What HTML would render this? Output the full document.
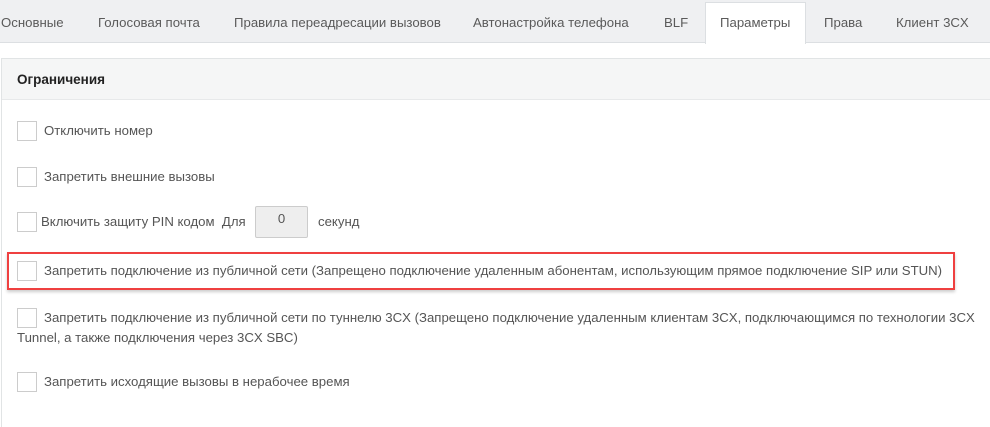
<!DOCTYPE html>
<html><head><meta charset="utf-8"><style>
html,body{margin:0;width:990px;height:427px;overflow:hidden;}
body{position:relative;background:#fff;font-family:"Liberation Sans",sans-serif;font-size:13.2px;color:#555;}
.tabs{position:absolute;left:0;top:0;width:990px;height:42px;background:#eff0f2;border-bottom:1px solid #dcdfe2;}
.tab{position:absolute;top:15px;white-space:nowrap;color:#5a5a5a;}
.active{position:absolute;left:705px;top:2px;width:99px;height:41px;background:#fff;border:1px solid #dcdfe2;border-bottom:none;}
.panel{position:absolute;left:1px;top:58px;width:988px;height:369px;border:1px solid #e1e4e5;border-right:none;border-bottom:none;}
.ph{height:40px;background:#f5f6f6;border-bottom:1px solid #e7e9ea;}
.cb{position:absolute;left:17px;width:18px;height:18px;border:1px solid #ccc;background:#fff;}
.t{position:absolute;left:44px;white-space:nowrap;color:#555;}
.inp{position:absolute;left:255px;top:206px;width:53px;height:32px;background:#eee;border:1px solid #ccc;border-radius:2px;box-sizing:border-box;text-align:center;line-height:24px;}
.red{position:absolute;left:7px;top:252px;width:944px;height:34px;border:2px solid #ef4040;box-shadow:0 2px 3px rgba(0,0,0,.2);}
</style></head><body>
<div class="tabs"></div>
<div class="active"></div>
<span class="tab" style="left:1px">Основные</span>
<span class="tab" style="left:98px">Голосовая почта</span>
<span class="tab" style="left:234px">Правила переадресации вызовов</span>
<span class="tab" style="left:473px">Автонастройка телефона</span>
<span class="tab" style="left:664px">BLF</span>
<span class="tab" style="left:720px">Параметры</span>
<span class="tab" style="left:824px">Права</span>
<span class="tab" style="left:896px">Клиент 3CX</span>
<div class="panel"><div class="ph"></div><b style="position:absolute;left:15px;top:13px;color:#222;font-size:13.5px;">Ограничения</b></div>
<div class="cb" style="top:121px"></div><span class="t" style="top:123px">Отключить номер</span>
<div class="cb" style="top:167px"></div><span class="t" style="top:169px">Запретить внешние вызовы</span>
<div class="cb" style="top:212px"></div><span class="t" style="left:41px;top:214px">Включить защиту PIN кодом&nbsp; Для</span>
<div class="inp">0</div><span class="t" style="left:318px;top:214px">секунд</span>
<div class="red"></div>
<div class="cb" style="top:261px"></div><span class="t" style="top:263px">Запретить подключение из публичной сети (Запрещено подключение удаленным абонентам, использующим прямое подключение SIP или STUN)</span>
<div class="cb" style="top:308px"></div><span class="t" style="top:310px">Запретить подключение из публичной сети по туннелю 3CX (Запрещено подключение удаленным клиентам 3CX, подключающимся по технологии 3CX</span>
<span class="t" style="left:17px;top:330px">Tunnel, а также подключения через 3CX SBC)</span>
<div class="cb" style="top:372px"></div><span class="t" style="top:374px">Запретить исходящие вызовы в нерабочее время</span>
</body></html>
